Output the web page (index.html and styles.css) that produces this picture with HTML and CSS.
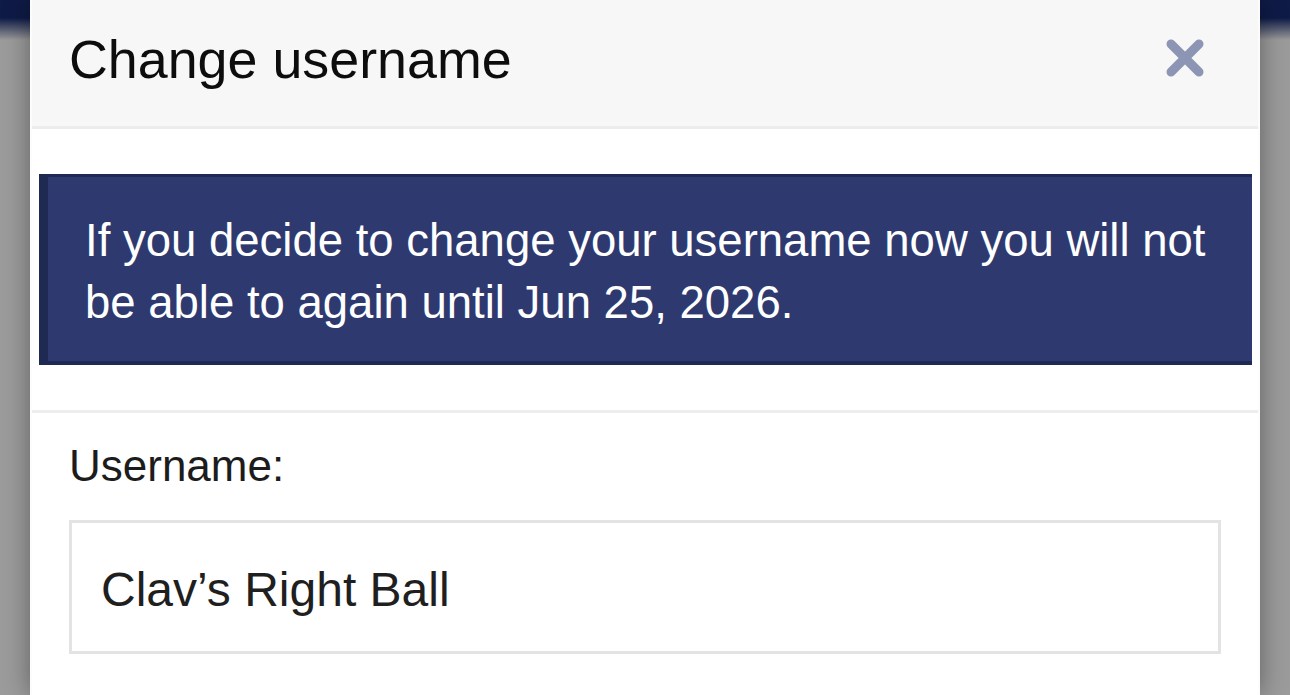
FILE: index.html
```html
<!DOCTYPE html>
<html lang="en">
<head>
<meta charset="utf-8">
<title>Change username</title>
<link rel="stylesheet" href="styles.css">
</head>
<body>
<div class="modal">
  <div class="modal-header">
    <h1 class="modal-title">Change username</h1>
    <button class="close" aria-label="Close">
      <svg width="40" height="40" viewBox="0 0 40 40"><path d="M6 6 L34 34 M34 6 L6 34" stroke="#8d95b4" stroke-width="9" stroke-linecap="round" fill="none"/></svg>
    </button>
  </div>
  <div class="notice-section">
    <div class="notice">If you decide to change your username now you will not be able to again until Jun 25, 2026.</div>
  </div>
  <div class="form">
    <label class="label" for="username">Username:</label>
    <input class="input" id="username" type="text" value="Clav’s Right Ball">
  </div>
</div>
</body>
</html>
```
FILE: styles.css
```css
html, body {
  margin: 0;
  padding: 0;
  height: 100%;
  overflow: hidden;
}
body {
  background: linear-gradient(to bottom, #0f1b47 0, #0f1b47 18px, #9b9b9b 40px);
  font-family: "Liberation Sans", Arial, Helvetica, sans-serif;
}
.modal {
  margin: 0 30px;
  width: 1230px;
  box-sizing: border-box;
  height: 100%;
  background: #ffffff;
  border-left: 2px solid #fcfcfc;
  border-right: 2px solid #fcfcfc;
  box-shadow: 0 0 24px rgba(0, 0, 0, 0.38);
}
.modal-header {
  display: flex;
  justify-content: space-between;
  align-items: flex-start;
  height: 129px;
  box-sizing: border-box;
  background: #f7f7f7;
  border-bottom: 3px solid #ececec;
  padding: 0 53px 0 37px;
}
.modal-title {
  margin: 0;
  padding-top: 27px;
  font-size: 53.8px;
  line-height: 1.2;
  font-weight: normal;
  color: #0d0d0d;
}
.close {
  margin-top: 38px;
  padding: 0;
  border: 0;
  background: none;
  width: 40px;
  height: 40px;
  display: block;
}
.close svg { display: block; }
.notice-section {
  padding: 45px 6px 45px 7px;
  border-bottom: 3px solid #ededed;
}
.notice {
  background: #2e3a6f;
  border-left: 9px solid #1f2a52;
  border-top: 3px solid #1f2a52;
  border-bottom: 4px solid #1f2a52;
  padding: 33px 16px 27px 37px;
  color: #ffffff;
  font-size: 45.5px;
  line-height: 62px;
}
.form {
  padding: 27px 37px 0 37px;
}
.label {
  display: block;
  font-size: 44px;
  line-height: 1.2;
  color: #1c1c1c;
  margin-bottom: 27px;
}
.input {
  display: block;
  width: 100%;
  height: 134px;
  box-sizing: border-box;
  border: 3px solid #e3e3e3;
  border-radius: 0;
  padding: 5px 29px 0 29px;
  font-family: "Liberation Sans", Arial, Helvetica, sans-serif;
  font-size: 48px;
  color: #1f1f1f;
  background: #ffffff;
  outline: none;
}
```
